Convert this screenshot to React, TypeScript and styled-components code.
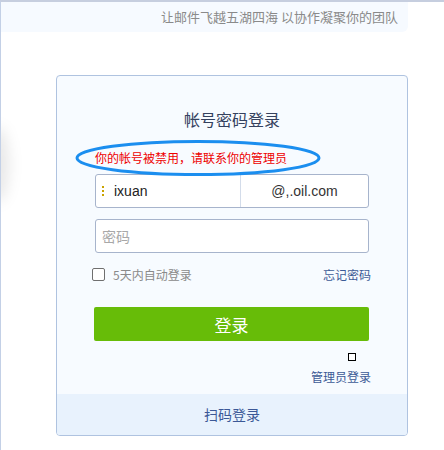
import React from 'react';
import styled, { createGlobalStyle } from 'styled-components';

const GlobalStyle = createGlobalStyle`
  html, body {
    margin: 0;
    padding: 0;
    background: #FFFFFF;
  }
  body {
    font-family: "Noto Sans CJK SC", "Liberation Sans", sans-serif;
  }
`;

const Page = styled.div`
  position: relative;
  min-height: 448px;
  border-top: 2px solid #C6CEDF;
  border-left: 1px solid #C3D0E6;
  overflow: hidden;
`;

const EdgeShadow = styled.div`
  position: absolute;
  left: -14px;
  top: 125px;
  width: 22px;
  height: 75px;
  border-radius: 50%;
  background: rgba(0, 0, 0, 0.09);
  filter: blur(7px);
`;

const Banner = styled.div`
  width: 397px;
  height: 30px;
  padding-right: 10px;
  background: #F6FAFF;
  border-bottom-right-radius: 6px;
  color: #8A8A8A;
  font-size: 13px;
  line-height: 30px;
  text-align: right;
`;

const Card = styled.div`
  width: 350px;
  margin: 43px 0 0 55px;
  border: 1px solid #AFC3E0;
  border-radius: 4px;
  background: #F7FBFF;
  overflow: hidden;
`;

const CardBody = styled.div`
  padding: 33px 0 0;
  display: flex;
  flex-direction: column;
`;

const Title = styled.div`
  color: #34415E;
  font-size: 16px;
  line-height: 20px;
  text-align: center;
`;

const ErrorRow = styled.div`
  position: relative;
  margin-top: 21px;
  padding-left: 38px;
  color: #EE0000;
  font-size: 12px;
  line-height: 16px;
`;

const Ring = styled.svg`
  position: absolute;
  left: 17px;
  top: -11px;
`;

const Field = styled.div<{ $top: number }>`
  display: flex;
  width: 272px;
  height: 32px;
  margin: ${p => p.$top}px 0 0 38px;
  border: 1px solid #A7B4CC;
  border-radius: 3px;
  background: #FFFFFF;
  overflow: hidden;
`;

const UserPart = styled.div`
  box-sizing: border-box;
  flex: 0 0 145px;
  display: flex;
  align-items: center;
  gap: 8px;
  padding-left: 6px;
  border-right: 1px solid #D3DCEA;
  color: #222222;
  font-family: "Liberation Sans", Arial, sans-serif;
  font-size: 14px;
`;

const Cursor = styled.span`
  width: 2px;
  height: 10px;
  border-left: 2px dotted #C9A300;
`;

const DomainPart = styled.div`
  flex: 1;
  display: flex;
  align-items: center;
  justify-content: center;
  color: #333333;
  font-family: "Liberation Sans", Arial, sans-serif;
  font-size: 14px;
`;

const Placeholder = styled.div`
  display: flex;
  align-items: center;
  padding-left: 6px;
  color: #A8A8A8;
  font-size: 14px;
`;

const OptionRow = styled.div`
  display: flex;
  align-items: center;
  justify-content: space-between;
  width: 279px;
  margin: 12px 0 0 35px;
  height: 18px;
  font-size: 12px;
`;

const Remember = styled.label`
  display: flex;
  align-items: center;
  gap: 8px;
  color: #8A8A8A;
`;

const Box = styled.span`
  width: 11px;
  height: 11px;
  border: 1px solid #6F6F6F;
  border-radius: 2px;
  background: #FFFFFF;
`;

const Link = styled.span`
  color: #3C5A96;
  font-size: 12px;
`;

const LoginButton = styled.button`
  width: 275px;
  height: 34px;
  margin: 24px 0 0 37px;
  border: none;
  border-radius: 2px;
  background: #67BC08;
  color: #FFFFFF;
  font-family: inherit;
  font-size: 17px;
  padding: 0;
`;

const AdminArea = styled.div`
  display: flex;
  flex-direction: column;
  align-items: flex-end;
  width: 314px;
  margin-top: 12px;
  padding-bottom: 9px;
`;

const BrokenImage = styled.span`
  width: 6px;
  height: 6px;
  margin-right: 15px;
  border: 1.5px solid #000000;
  background: #FFFFFF;
`;

const AdminLink = styled(Link)`
  margin-top: 8px;
  line-height: 16px;
`;

const Footer = styled.div`
  height: 41px;
  background: #E8F2FD;
  color: #3B5897;
  font-size: 14px;
  line-height: 40px;
  text-align: center;
`;

export default function App() {
  return (
    <>
      <GlobalStyle />
      <Page>
        <EdgeShadow />
        <Banner>让邮件飞越五湖四海 以协作凝聚你的团队</Banner>
        <Card>
          <CardBody>
            <Title>帐号密码登录</Title>
            <ErrorRow>
              你的帐号被禁用，请联系你的管理员
              <Ring width="250" height="40" viewBox="0 0 250 40">
                <ellipse cx="124" cy="19" rx="121" ry="16.5" fill="none" stroke="#1B8EEF" strokeWidth="3" />
              </Ring>
            </ErrorRow>
            <Field $top={8}>
              <UserPart>
                <Cursor />
                <span>ixuan</span>
              </UserPart>
              <DomainPart>@,.oil.com</DomainPart>
            </Field>
            <Field $top={11}>
              <Placeholder>密码</Placeholder>
            </Field>
            <OptionRow>
              <Remember>
                <Box />
                5天内自动登录
              </Remember>
              <Link>忘记密码</Link>
            </OptionRow>
            <LoginButton>登录</LoginButton>
            <AdminArea>
              <BrokenImage />
              <AdminLink>管理员登录</AdminLink>
            </AdminArea>
          </CardBody>
          <Footer>扫码登录</Footer>
        </Card>
      </Page>
    </>
  );
}
